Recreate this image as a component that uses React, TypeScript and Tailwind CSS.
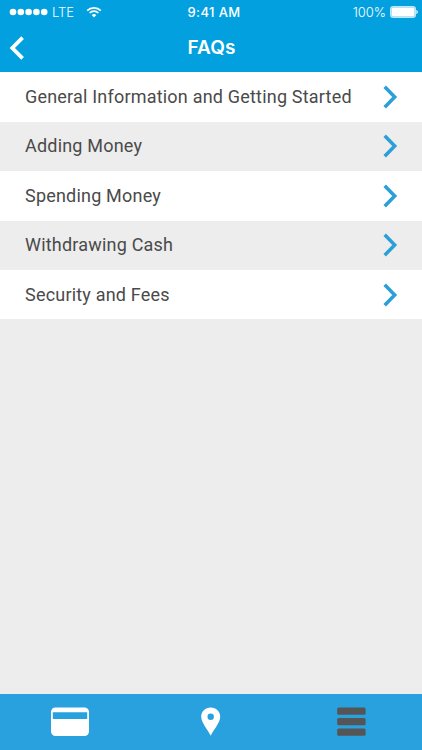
const topics = [
  'General Information and Getting Started',
  'Adding Money',
  'Spending Money',
  'Withdrawing Cash',
  'Security and Fees',
]

function StatusBar() {
  return (
    <div className="grid h-6 grid-cols-3 items-center pl-[9px] pr-1 text-[13px] leading-none">
      <div className="flex items-center">
        <svg width="39" height="8" viewBox="0 0 39 8" fill="currentColor">
          {[4, 11.8, 19.6, 27.4, 35.2].map(cx => <circle key={cx} cx={cx} cy="4" r="3.3" />)}
        </svg>
        <span className="ml-1 w-[34px] font-light tracking-[-0.1px]">LTE</span>
        <svg width="16" height="12" viewBox="0 0 16 12" fill="none" stroke="currentColor" strokeWidth="1.7">
          <path d="M1.2 4.6a9.6 9.6 0 0 1 13.6 0" />
          <path d="M3.6 7a6.2 6.2 0 0 1 8.8 0" />
          <path d="M8 11.4 5.7 9.1a3.3 3.3 0 0 1 4.6 0z" fill="currentColor" stroke="none" />
        </svg>
      </div>
      <span className="pl-px text-center font-medium tracking-[0.4px]">9:41 AM</span>
      <div className="flex items-center justify-end gap-1">
        <span className="font-light">100%</span>
        <svg width="28" height="12" viewBox="0 0 28 12" fill="currentColor">
          <rect x="0.5" y="0.5" width="25" height="11" rx="2" fillOpacity="0.4" stroke="currentColor" strokeOpacity="0.7" />
          <rect x="1.5" y="1.5" width="23" height="9" rx="1" />
          <path d="M26.4 4c1.8.6 1.8 3.4 0 4z" />
        </svg>
      </div>
    </div>
  )
}

function Header() {
  return (
    <header className="h-[72.4px] bg-[#02a0df] text-white">
      <StatusBar />
      <div className="grid h-[47px] grid-cols-[1fr_auto_1fr] items-center px-[9px]">
        <button aria-label="Back" className="w-4">
          <svg width="16" height="24" viewBox="0 0 16 24" fill="none" stroke="currentColor" strokeWidth="3.8">
            <path d="M13.6 1.6 3.3 12l10.3 10.4" />
          </svg>
        </button>
        <h1 className="pl-px text-[19px] font-semibold leading-none tracking-[0.1px]">FAQs</h1>
      </div>
    </header>
  )
}

function TopicRow({ label }: { label: string }) {
  return (
    <li className="flex h-[49.4px] items-center justify-between pl-[25px] pr-6 odd:bg-white even:bg-[#ededed]">
      <span className="whitespace-nowrap font-['Roboto','Liberation_Sans',sans-serif] text-[18px] leading-none tracking-[0.2px] text-[#4a4a4a]">
        {label}
      </span>
      <svg width="16" height="24" viewBox="0 0 16 24" fill="none" stroke="#2c9fd9" strokeWidth="3.5">
        <path d="M2.7 1.8 12.7 12l-10 10.2" />
      </svg>
    </li>
  )
}

function TabBar() {
  return (
    <nav className="grid h-14 grid-cols-3 place-items-center bg-[#28a1de] pb-px text-white">
      <button aria-label="Card">
        <svg width="38" height="29" viewBox="0 -0.5 38 29">
          <rect width="38" height="28.5" rx="4.5" fill="currentColor" />
          <path d="M1.8 4.8h34.4v6.8H1.8z" fill="#28a1de" />
        </svg>
      </button>
      <button aria-label="Locations">
        <svg width="20" height="29" viewBox="0 -0.5 20 29" fill="currentColor">
          <path fillRule="evenodd" d="M9.7 0c5.4 0 9.5 4 9.5 9.2 0 5.6-6.3 12.6-9.5 19C6.5 21.8.2 14.8.2 9.2.2 4 4.3 0 9.7 0zm0 6a3.2 3.2 0 1 0 0 6.4 3.2 3.2 0 0 0 0-6.4z" />
        </svg>
      </button>
      <button aria-label="Menu">
        <svg width="29" height="29" viewBox="0 -0.5 29 29" fill="#555">
          <rect x="0.2" y="0" width="28.4" height="7.2" rx="1.5" />
          <rect x="0.2" y="10.5" width="28.4" height="7.2" rx="1.5" />
          <rect x="0.2" y="21" width="28.4" height="7.2" rx="1.5" />
        </svg>
      </button>
    </nav>
  )
}

export default function App() {
  return (
    <div className="flex h-screen flex-col overflow-hidden bg-[#ededed] font-['Inter','Liberation_Sans',sans-serif]">
      <Header />
      <main className="flex-1">
        <ul>
          {topics.map(label => <TopicRow key={label} label={label} />)}
        </ul>
      </main>
      <TabBar />
    </div>
  )
}
